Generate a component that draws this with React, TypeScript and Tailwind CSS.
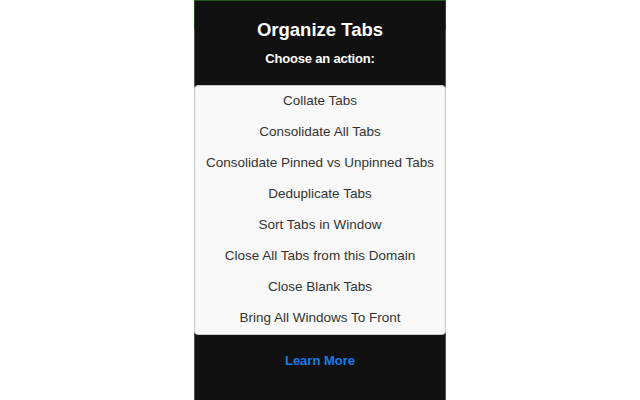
import React from "react";

const items = [
  "Collate Tabs",
  "Consolidate All Tabs",
  "Consolidate Pinned vs Unpinned Tabs",
  "Deduplicate Tabs",
  "Sort Tabs in Window",
  "Close All Tabs from this Domain",
  "Close Blank Tabs",
  "Bring All Windows To Front",
];

export default function App() {
  return (
    <div className="w-[640px] h-[400px] bg-white flex justify-center" style={{ fontFamily: "'Liberation Sans', Arial, sans-serif" }}>
      <div className="w-[252px] h-[400px] bg-[#111111] flex flex-col border-x border-[#555]">
        <div className="border-t border-[#1f5a1f] h-[30px] -mx-px border-x border-x-[#1f4a1f] relative">
          <div className="absolute inset-x-0 top-[9px] text-center text-white font-bold text-[18.5px] leading-[40px]">Organize Tabs</div>
        </div>
        <div className="h-[55px] pt-[18px] text-center text-white font-bold text-[13px] tracking-[-0.2px] leading-[22px]">Choose an action:</div>
        <div className="bg-[#f8f8f8] border border-[#c8c8c8] rounded-[4px] -mx-px">
          {items.map((t) => (
            <div key={t} className="h-[31px] flex items-center justify-center text-[#333] text-[13.5px]">{t}</div>
          ))}
        </div>
        <div className="pt-[15px] text-center text-[#1a7be6] font-bold text-[13px] leading-[22px]">Learn More</div>
      </div>
    </div>
  );
}
